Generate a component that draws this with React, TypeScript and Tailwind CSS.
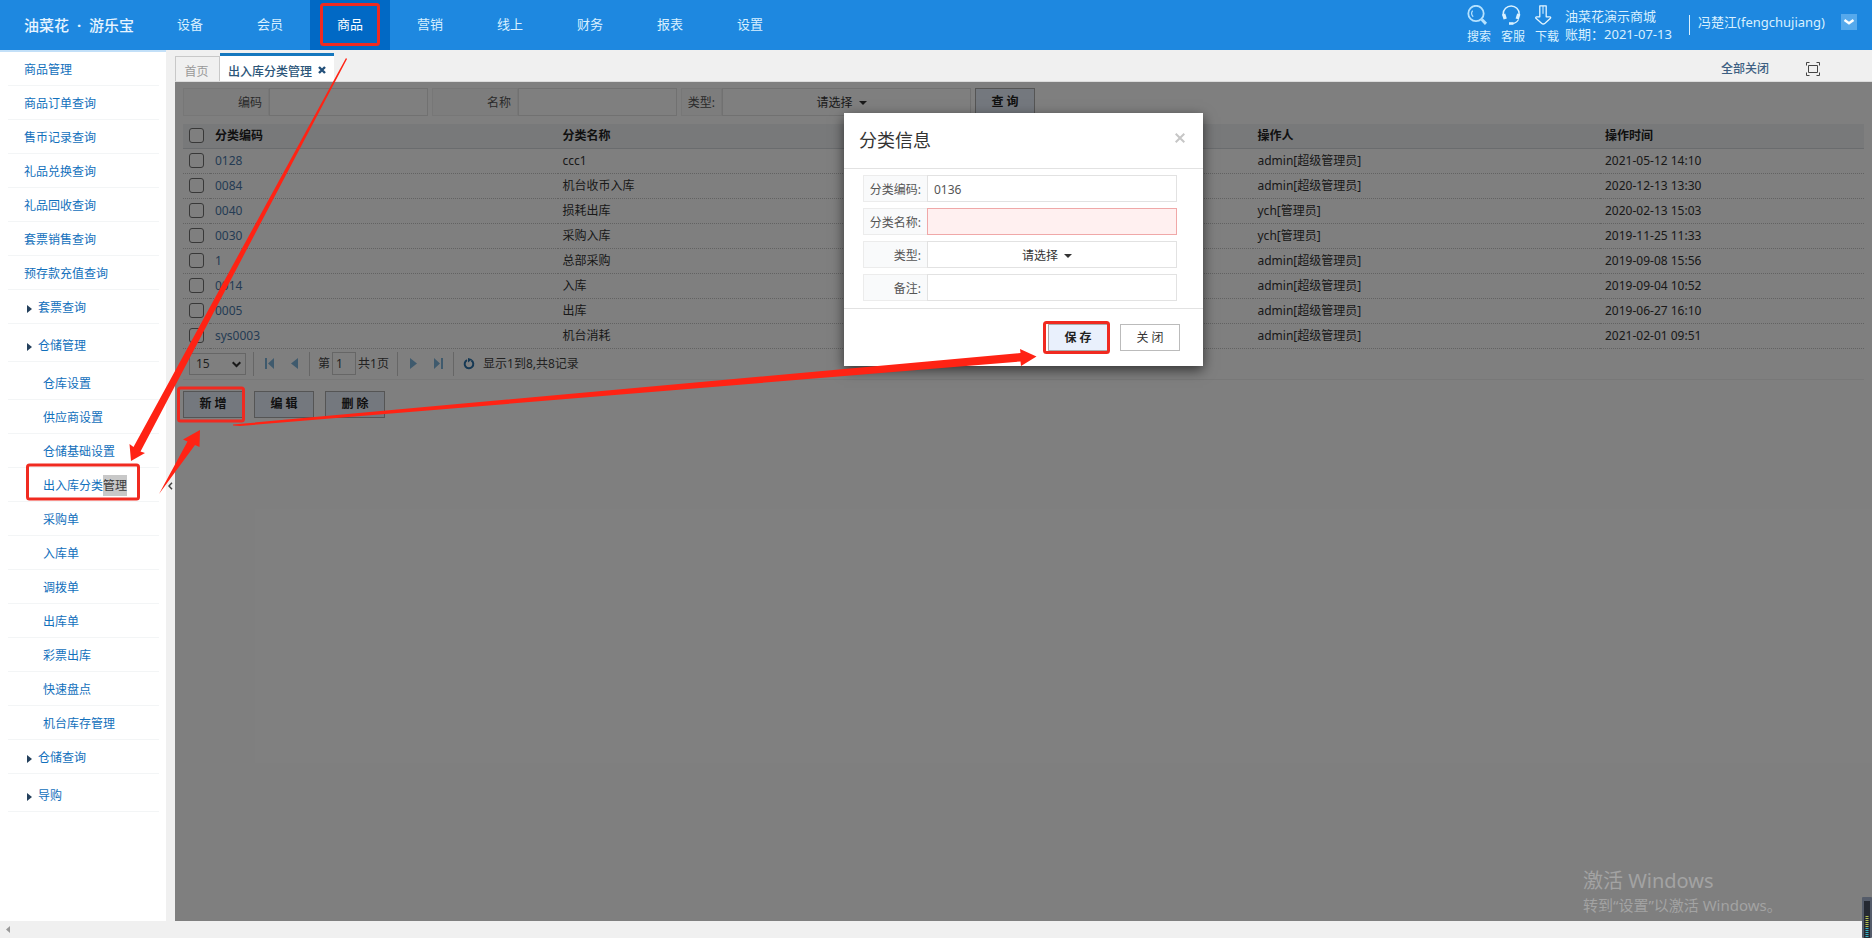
import React from "react";

const NAV = ["设备", "会员", "商品", "营销", "线上", "财务", "报表", "设置"];

type MenuItem = { label: string; kind: "top" | "group" | "sub"; tall?: boolean; selected?: string };

const MENU: MenuItem[] = [
  { label: "商品管理", kind: "top" },
  { label: "商品订单查询", kind: "top" },
  { label: "售币记录查询", kind: "top" },
  { label: "礼品兑换查询", kind: "top" },
  { label: "礼品回收查询", kind: "top" },
  { label: "套票销售查询", kind: "top" },
  { label: "预存款充值查询", kind: "top" },
  { label: "套票查询", kind: "group" },
  { label: "仓储管理", kind: "group", tall: true },
  { label: "仓库设置", kind: "sub", tall: true },
  { label: "供应商设置", kind: "sub" },
  { label: "仓储基础设置", kind: "sub" },
  { label: "出入库分类", kind: "sub", selected: "管理" },
  { label: "采购单", kind: "sub" },
  { label: "入库单", kind: "sub" },
  { label: "调拨单", kind: "sub" },
  { label: "出库单", kind: "sub" },
  { label: "彩票出库", kind: "sub" },
  { label: "快速盘点", kind: "sub" },
  { label: "机台库存管理", kind: "sub" },
  { label: "仓储查询", kind: "group" },
  { label: "导购", kind: "group", tall: true },
];

const PAD = { top: "pl-4", group: "pl-3", sub: "pl-[35px]" };

const ROWS = [
  ["0128", "ccc1", "admin[超级管理员]", "2021-05-12 14:10"],
  ["0084", "机台收币入库", "admin[超级管理员]", "2020-12-13 13:30"],
  ["0040", "损耗出库", "ych[管理员]", "2020-02-13 15:03"],
  ["0030", "采购入库", "ych[管理员]", "2019-11-25 11:33"],
  ["1", "总部采购", "admin[超级管理员]", "2019-09-08 15:56"],
  ["0014", "入库", "admin[超级管理员]", "2019-09-04 10:52"],
  ["0005", "出库", "admin[超级管理员]", "2019-06-27 16:10"],
  ["sys0003", "机台消耗", "admin[超级管理员]", "2021-02-01 09:51"],
];

function Header() {
  return (
    <header className="flex h-[50px] shrink-0 items-stretch bg-[#1e88e0] text-[13px] text-[#d8f0ff]">
      <div className="flex w-[150px] items-center pl-6 text-[15px] font-medium text-[#e6f4ff]">
        <span>油菜花</span>
        <span className="w-5 text-center font-bold">·</span>
        <span>游乐宝</span>
      </div>
      <nav className="flex">
        {NAV.map((n) => (
          <a
            key={n}
            href="#"
            className={
              n === "商品"
                ? "flex w-20 items-center justify-center bg-[#0169c5] text-white"
                : "flex w-20 items-center justify-center"
            }
          >
            {n}
          </a>
        ))}
      </nav>
      <div className="ml-auto flex pr-[15px]">
        <div className="flex gap-[10px] pt-[5px] text-xs leading-4">
          <a href="#" className="flex w-6 flex-col gap-[3px]">
            <svg width="22" height="21" viewBox="0 0 22 21" fill="none" stroke="#b5e2ff">
              <circle cx="9" cy="8.500" r="7.700" strokeWidth="1.800" />
              <path d="M6.200 11.700a4.600 4.600 0 0 1-.6-6" strokeWidth="1.200" />
              <path d="M14.800 14.500l4.200 4.400" strokeWidth="3" />
            </svg>
            <span>搜索</span>
          </a>
          <a href="#" className="flex w-6 flex-col gap-[3px]">
            <svg width="22" height="21" viewBox="0 0 22 21" fill="none" stroke="#d9f1ff">
              <path d="M2.200 10.500V9a8 8 0 0 1 16 0v1.500" strokeWidth="1.500" />
              <path d="M2.600 9l1.600 5M17.800 9l-1.600 5" strokeWidth="3.400" />
              <path d="M17.500 14.500c-1.300 2.500-3.500 3.800-6 4" strokeWidth="1.200" />
              <path d="M8 18.500h4.500" strokeWidth="2.600" />
            </svg>
            <span>客服</span>
          </a>
          <a href="#" className="flex w-6 flex-col gap-[3px]">
            <svg width="18" height="21" viewBox="0 0 18 21" fill="none" stroke="#e3f5ff" strokeWidth="1.300">
              <path d="M4.800.8h6.400v11h3.600c1 0 1.200 1 .4 1.800L10 18.200c-1.200 1-2.400 1-3.500 0L1.200 13.600c-.8-.8-.5-1.800.5-1.800h3.100z" strokeLinejoin="round" />
              <path d="M8 .8v8" strokeWidth="1" />
            </svg>
            <span>下载</span>
          </a>
        </div>
        <div className="ml-[6px] w-[114px] whitespace-nowrap pt-[7px] leading-[18px]">
          <div>油菜花演示商城</div>
          <div>账期：2021-07-13</div>
        </div>
        <div className="ml-[10px] mt-[15px] h-5 w-px bg-[#d8f0ff]" />
        <div className="ml-2 pt-3 leading-5">冯楚江(fengchujiang)</div>
        <button aria-label="用户菜单" className="ml-4 mt-[14px] flex h-4 w-4 items-center justify-center bg-[#56a9ec]">
          <svg width="12" height="8" viewBox="0 0 12 8" fill="none" stroke="#fff" strokeWidth="2.400">
            <path d="M1.500 2L6 5.300 10.500 2" />
          </svg>
        </button>
      </div>
    </header>
  );
}

function Sidebar() {
  return (
    <aside className="w-[166px] shrink-0 border-t-2 border-[#c3e0f8] bg-white text-xs text-[#1270bc]">
      <ul className="pl-2 pr-[7px]">
        {MENU.map((m) => (
          <li
            key={m.label}
            className={`flex items-center border-b border-[#f3f5f6] ${m.tall ? "h-[38px] pt-1" : "h-[34px]"} ${PAD[m.kind]}`}
          >
            {m.kind === "group" && (
              <svg className="ml-[7px] mr-[6px] mt-1" width="5" height="8" viewBox="0 0 5 8">
                <path d="M0 0l5 4-5 4z" fill="#24405c" />
              </svg>
            )}
            <a href="#" className="pt-[3px]">
              {m.label}
              {m.selected && <span className="bg-[#c8c8c8] py-[2px] text-[#3c3c3c]">{m.selected}</span>}
            </a>
          </li>
        ))}
      </ul>
    </aside>
  );
}

function TabBar() {
  return (
    <div className="flex h-8 shrink-0 items-end border-b border-[#dcdcdc] bg-[#f0f0f0] text-xs">
      <a href="#" className="flex h-[25px] w-[45px] items-center justify-center border border-b-0 border-[#c8c8c8] pr-[2px] pt-[6px] text-[#999]">
        首页
      </a>
      <div className="flex h-7 w-[114px] items-center gap-[6px] border-t-[3px] border-[#1577be] bg-white pl-2 pt-[6px] text-[#2b5578]">
        <span className="whitespace-nowrap font-medium">出入库分类管理</span>
        <button aria-label="关闭标签" className="pb-1">
          <svg width="8" height="8" viewBox="0 0 8 8" stroke="#23507a" strokeWidth="2.400">
            <path d="M1 1l6 6M7 1L1 7" />
          </svg>
        </button>
      </div>
      <div className="mb-1 ml-auto mr-[52px] flex items-center gap-[37px] text-[#3d5f82]">
        <a href="#" className="font-medium">全部关闭</a>
        <button aria-label="全屏">
          <svg width="14" height="14" viewBox="0 0 14 14" fill="none" stroke="#454545">
            <path d="M.5 3.500v-3h3M10.500.5h3v3M13.500 10.500v3h-3M3.500 13.500h-3v-3M2.500 3.500h9v7h-9z" />
          </svg>
        </button>
      </div>
    </div>
  );
}

function TypeSelect({ id, className }: { id: string; className: string }) {
  return (
    <div className={`relative ${className}`}>
      <select
        id={id}
        className="h-full w-full appearance-none border border-[#e2e2e2] bg-white pr-6 pt-[2px] text-center text-[#333] [text-align-last:center]"
      >
        <option>请选择</option>
      </select>
      <svg className="pointer-events-none absolute left-1/2 top-1/2 -mt-[1px] ml-3" width="8" height="4" viewBox="0 0 8 4">
        <path d="M0 0h8L4 4z" fill="#333" />
      </svg>
    </div>
  );
}

const ACTION = "h-[27px] w-[60px] border border-[#aaa] bg-[#e9f0fc] text-xs font-bold text-[#222]";
const SEP = "h-6 w-px bg-[#ccc]";

function SearchBar() {
  const label = "flex h-7 items-center justify-end border border-[#eee] bg-[#fafafa] pr-[6px] pt-[2px] text-[#555]";
  const input = "h-7 w-[159px] border border-[#e2e2e2] bg-white px-2";
  return (
    <form className="flex h-7">
      <label htmlFor="q-code" className={`${label} w-[86px]`}>编码</label>
      <input id="q-code" className={input} />
      <label htmlFor="q-name" className={`${label} ml-1 w-[86px]`}>名称</label>
      <input id="q-name" className={input} />
      <label htmlFor="q-type" className={`${label} ml-1 w-[41px]`}>类型:</label>
      <TypeSelect id="q-type" className="h-7 w-[249px]" />
      <button type="button" className={`${ACTION} ml-1`}>查 询</button>
    </form>
  );
}

function Box({ label }: { label: string }) {
  return (
    <input
      type="checkbox"
      aria-label={label}
      className="block h-[15px] w-[15px] appearance-none rounded-[3px] border border-[#707070] bg-white"
    />
  );
}

function DataTable() {
  return (
    <table className="mt-2 w-full table-fixed border-collapse text-left text-[#333]">
      <colgroup>
        <col className="w-[27px]" />
        <col />
        <col />
        <col />
        <col />
        <col className="w-[264px]" />
      </colgroup>
      <thead>
        <tr className="h-6 border-b border-[#d4d8dc] bg-[#f0f2f5] text-[#222]">
          <th className="pl-[6px]"><Box label="全选" /></th>
          <th className="px-[5px]">分类编码</th>
          <th className="px-[5px]">分类名称</th>
          <th className="px-[5px]"></th>
          <th className="px-[5px]">操作人</th>
          <th className="px-[5px]">操作时间</th>
        </tr>
      </thead>
      <tbody>
        {ROWS.map((r) => (
          <tr key={r[0]} className="h-[25px] border-b border-dotted border-[#c4c4c4]">
            <td className="pl-[6px]"><Box label={r[0]} /></td>
            <td className="px-[5px]"><a href="#" className="text-[#4a78a8]">{r[0]}</a></td>
            <td className="px-[5px]">{r[1]}</td>
            <td className="px-[5px]"></td>
            <td className="px-[5px]">{r[2]}</td>
            <td className="px-[5px]">{r[3]}</td>
          </tr>
        ))}
      </tbody>
    </table>
  );
}

function Pager() {
  return (
    <div className="flex h-[31px] items-center border-b border-[#f0f0f0] pl-[6px] text-[#444]">
      <div className="relative h-[22px] w-[57px]">
        <select aria-label="每页条数" className="h-full w-full appearance-none border border-[#ccc] bg-white pl-[6px]">
          <option>15</option>
        </select>
        <svg className="pointer-events-none absolute right-[5px] top-2" width="9" height="7" viewBox="0 0 9 7" fill="none" stroke="#333" strokeWidth="2">
          <path d="M.7 1.200L4.500 5 8.300 1.200" />
        </svg>
      </div>
      <div className={`${SEP} ml-[7px]`} />
      <button aria-label="首页" className="ml-[11px]">
        <svg width="9" height="11" viewBox="0 0 9 11" fill="#7fb4da"><path d="M0 0h2v11H0zM9 0v11L3 5.500z" /></svg>
      </button>
      <button aria-label="上一页" className="ml-[17px]">
        <svg width="7" height="11" viewBox="0 0 7 11" fill="#7fb4da"><path d="M7 0v11L0 5.500z" /></svg>
      </button>
      <div className={`${SEP} ml-[11px]`} />
      <label htmlFor="page-no" className="ml-2">第</label>
      <input id="page-no" defaultValue="1" className="ml-[2px] h-[23px] w-[24px] border border-[#ccc] bg-white pl-[3px]" />
      <span className="ml-[2px] w-8 whitespace-nowrap">共1页</span>
      <div className={`${SEP} ml-[7px]`} />
      <button aria-label="下一页" className="ml-3">
        <svg width="7" height="11" viewBox="0 0 7 11" fill="#7fb4da"><path d="M0 0v11l7-5.500z" /></svg>
      </button>
      <button aria-label="末页" className="ml-[17px]">
        <svg width="9" height="11" viewBox="0 0 9 11" fill="#7fb4da"><path d="M7 0h2v11H7zM0 0v11l6-5.500z" /></svg>
      </button>
      <div className={`${SEP} ml-[10px]`} />
      <button aria-label="刷新" className="ml-[9px]">
        <svg width="12" height="12" viewBox="0 0 12 12" fill="none" stroke="#2a70a8" strokeWidth="2">
          <path d="M4 2.200A4.300 4.300 0 1 0 8.300 2.400" />
          <path d="M5 0v4.600L9.200 1.200z" fill="#2a70a8" stroke="none" />
        </svg>
      </button>
      <span className="ml-2">显示1到8,共8记录</span>
    </div>
  );
}

function Dialog() {
  const label = "flex h-[27px] w-16 shrink-0 items-center justify-end border border-r-0 border-[#ececec] bg-[#f9fafb] pr-[6px] pt-[2px] whitespace-nowrap";
  const input = "h-[27px] min-w-0 flex-1 border px-[6px] pt-[2px]";
  return (
    <section role="dialog" aria-label="分类信息" className="w-[359px] bg-white text-xs text-[#555] shadow-[0_4px_12px_rgba(0,0,0,0.6)]">
      <div className="flex h-14 items-center justify-between border-b border-[#e2e2e2] pb-[2px] pl-[15px] pr-[18px]">
        <h2 className="text-lg text-[#333]">分类信息</h2>
        <button aria-label="关闭" className="mb-[3px]">
          <svg width="10" height="10" viewBox="0 0 10 10" stroke="#c6c6c6" strokeWidth="2"><path d="M.7.7l8.600 8.600M9.300.7L.7 9.300" /></svg>
        </button>
      </div>
      <div className="flex flex-col gap-[6px] border-b border-[#e2e2e2] pb-[7px] pl-[19px] pr-[26px] pt-[6px]">
        <div className="flex">
          <label htmlFor="f-code" className={label}>分类编码:</label>
          <input id="f-code" defaultValue="0136" className={`${input} border-[#e2e2e2]`} />
        </div>
        <div className="flex">
          <label htmlFor="f-name" className={label}>分类名称:</label>
          <input id="f-name" className={`${input} border-[#f0a8a8] bg-[#fff0f0]`} />
        </div>
        <div className="flex">
          <label htmlFor="f-type" className={label}>类型:</label>
          <TypeSelect id="f-type" className="h-[27px] flex-1" />
        </div>
        <div className="flex">
          <label htmlFor="f-memo" className={label}>备注:</label>
          <input id="f-memo" className={`${input} border-[#e2e2e2]`} />
        </div>
      </div>
      <div className="flex h-[57px] items-center justify-end gap-3 pr-[23px]">
        <button className={ACTION}>保 存</button>
        <button className="h-[27px] w-[60px] border border-[#bbb] bg-white text-[#333]">关 闭</button>
      </div>
    </section>
  );
}

function Annotations() {
  return (
    <svg className="pointer-events-none absolute left-0 top-0 z-20" width="1110" height="510" viewBox="0 0 1110 510" aria-hidden="true">
      <g fill="#ff2314">
        <path d="M346 58L347 59 140.500 451.500 145 453 131 461 129.500 444 133.500 447z" />
        <path d="M159 494L187.500 441.500 183 439.500 200 430 199.500 447 195 445z" />
        <path d="M233 424.500L1020.500 353 1020 349 1036.500 356.500 1021 366 1020.500 361.500 240 426 233 425.500z" />
      </g>
      <g fill="none" stroke="#f02a20" strokeWidth="3">
        <rect x="321.500" y="4.500" width="57" height="40" rx="2" />
        <rect x="27.500" y="465" width="111" height="34" rx="2" />
        <rect x="178.500" y="388" width="65" height="33" rx="2" />
        <rect x="1044.500" y="322.500" width="64" height="30" rx="2" />
      </g>
    </svg>
  );
}

export default function App() {
  return (
    <div className="relative flex min-h-screen flex-col overflow-hidden bg-white font-['Noto_Sans','Noto_Sans_CJK_SC',sans-serif]">
      <Header />
      <div className="flex flex-1">
        <Sidebar />
        <div className="flex w-[9px] shrink-0 items-center justify-center bg-[#f0f0f0]">
          <svg width="5" height="8" viewBox="0 0 5 8" fill="none" stroke="#444" strokeWidth="1.500"><path d="M4 .8L1 4l3 3.200" /></svg>
        </div>
        <main className="flex min-w-0 flex-1 flex-col">
          <TabBar />
          <div className="relative flex-1 px-2 pt-[6px] text-xs">
            <SearchBar />
            <DataTable />
            <Pager />
            <div className="mt-[11px] flex gap-[11px]">
              <button className={ACTION}>新 增</button>
              <button className={ACTION}>编 辑</button>
              <button className={ACTION}>删 除</button>
            </div>
            <div className="absolute inset-0 flex items-start justify-center bg-black/50 pt-[31px]">
              <Dialog />
            </div>
            <div className="absolute bottom-[6px] right-[94px] w-[195px] whitespace-nowrap text-[#a3a3a3]">
              <div className="text-xl leading-7">激活 Windows</div>
              <div className="text-[15px] leading-5">转到“设置”以激活 Windows。</div>
            </div>
          </div>
        </main>
      </div>
      <div className="flex h-[17px] shrink-0 items-center bg-[#f0f0f0] pl-[6px]">
        <svg width="4" height="7" viewBox="0 0 4 7"><path d="M4 0v7L0 3.500z" fill="#999" /></svg>
      </div>
      <svg className="absolute bottom-0 right-0" width="10" height="41" viewBox="0 0 10 41" aria-hidden="true">
        <rect width="10" height="41" rx="1" fill="#555c6a" />
        <rect x="2" y="4" width="6" height="37" fill="#252932" />
        <path d="M5 19v12" stroke="#b5c352" strokeWidth="3" strokeDasharray="1 1" />
        <path d="M5 31v10" stroke="#38b4c4" strokeWidth="3" strokeDasharray="1 1" />
      </svg>
      <Annotations />
    </div>
  );
}
